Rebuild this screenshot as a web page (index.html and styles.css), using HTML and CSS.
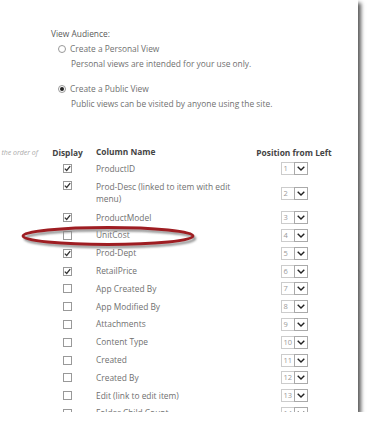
FILE: index.html
```html
<!DOCTYPE html>
<html lang="en">
<head>
    <meta charset="UTF-8">
    <meta name="viewport" content="width=device-width, initial-scale=1.0">
    <title>Edit View - Columns</title>
    <link rel="stylesheet" href="styles.css">
</head>
<body>
    <div class="sheet">
        <div class="audience">
            <div class="aud-title">View Audience:</div>
            <div class="option">
                <div class="opt-label"><span class="radio"></span>Create a Personal View</div>
                <div class="opt-desc">Personal views are intended for your use only.</div>
            </div>
            <div class="option">
                <div class="opt-label"><span class="radio radio-on"></span>Create a Public View</div>
                <div class="opt-desc">Public views can be visited by anyone using the site.</div>
            </div>
        </div>

        <div class="columns">
            <div class="col-row col-head">
                <div class="c-note"><span>the order of</span></div>
                <div class="c-disp">Display</div>
                <div class="c-name">Column Name</div>
                <div class="c-pos">Position from Left</div>
            </div>
            <div id="rows"></div>

            <svg class="ring" width="180" height="26" viewBox="0 0 180 26">
                <defs>
                    <filter id="soft" x="-10%" y="-30%" width="120%" height="160%">
                        <feGaussianBlur stdDeviation="1.2"/>
                    </filter>
                </defs>
                <ellipse cx="89" cy="13.5" rx="85" ry="8.5" fill="none" stroke="#888" stroke-width="2.5" filter="url(#soft)"/>
                <ellipse cx="87" cy="11" rx="85" ry="8.5" fill="none" stroke="#9e1d22" stroke-width="2.8"/>
            </svg>
        </div>
    </div>

    <script>
        const columns = [
            ['ProductID', true],
            ['Prod-Desc (linked to item with edit menu)', true],
            ['ProductModel', true],
            ['UnitCost', false],
            ['Prod-Dept', true],
            ['RetailPrice', true],
            ['App Created By', false],
            ['App Modified By', false],
            ['Attachments', false],
            ['Content Type', false],
            ['Created', false],
            ['Created By', false],
            ['Edit (link to edit item)', false],
            ['Folder Child Count', false]
        ];

        const checkSvg = '<svg width="7" height="7" viewBox="0 0 7 7"><path d="M0.8 3.6 L2.7 5.5 L6.2 1.2" fill="none" stroke="#333" stroke-width="1.3"/></svg>';

        const rows = document.getElementById('rows');
        columns.forEach(([name, shown], i) => {
            const row = document.createElement('div');
            row.className = 'col-row' + (name.length > 30 ? ' col-tall' : '');
            row.innerHTML =
                '<div class="c-note"></div>' +
                '<div class="c-disp"><span class="check">' + (shown ? checkSvg : '') + '</span></div>' +
                '<div class="c-name">' + name + '</div>' +
                '<div class="c-pos"><span class="pick"><span class="pick-num">' + (i + 1) + '</span>' +
                '<span class="pick-arrow"><svg width="8" height="5" viewBox="0 0 8 5"><path d="M0.7 0.7 L4 4 L7.3 0.7" fill="none" stroke="#222" stroke-width="1.4"/></svg></span></span></div>';
            rows.appendChild(row);
        });
    </script>
</body>
</html>
```

FILE: styles.css
```css
* {
    box-sizing: border-box;
    margin: 0;
    padding: 0;
}

body {
    margin: 0;
    background-color: #ffffff;
    font-family: "Open Sans", "Noto Sans", sans-serif;
    font-size: 8.4px;
    color: #707070;
    overflow: hidden;
}

.sheet {
    position: relative;
    width: 358px;
    height: 412px;
    overflow: hidden;
    background-color: #fff;
    box-shadow: 3px 3px 4px rgba(0, 0, 0, 0.65);
    padding-top: 26px;
}

/* audience block */
.audience {
    margin-left: 51px;
}

.aud-title {
    line-height: 15px;
    color: #5a5a5a;
}

.option {
    margin-left: 7px;
    margin-bottom: 10px;
}

.opt-label {
    display: flex;
    align-items: center;
    line-height: 15px;
}

.opt-desc {
    padding-left: 13px;
    line-height: 15px;
}

.radio {
    width: 8px;
    height: 8px;
    border: 1px solid #999;
    border-radius: 50%;
    margin-right: 4px;
    display: flex;
    align-items: center;
    justify-content: center;
}

.radio-on::after {
    content: "";
    width: 4px;
    height: 4px;
    border-radius: 50%;
    background-color: #222;
}

/* columns table */
.columns {
    position: relative;
    margin-top: 33px;
}

.col-row {
    display: flex;
    align-items: center;
    height: 17.8px;
}

.col-head {
    height: 16px;
    font-weight: 700;
    color: #444;
}

.col-tall {
    height: 31px;
    align-items: flex-start;
}

.c-note {
    width: 46px;
    display: flex;
    justify-content: flex-end;
    overflow: hidden;
    white-space: nowrap;
    font-size: 7px;
    font-style: italic;
    font-weight: 400;
    color: #aaa;
    padding-right: 8px;
}

.c-disp {
    width: 43px;
    display: flex;
    justify-content: center;
}

.c-name {
    width: 163px;
    padding-left: 7px;
    padding-right: 12px;
    line-height: 12px;
}

.col-tall .c-disp,
.col-tall .c-name {
    padding-top: 3px;
}

.col-tall .c-pos {
    align-self: center;
}

.c-pos {
    width: 84px;
    display: flex;
    justify-content: center;
}

.check {
    width: 9px;
    height: 9px;
    border: 1px solid #999;
    display: flex;
    align-items: center;
    justify-content: center;
    background-color: #fff;
}

.pick {
    display: flex;
    height: 13px;
}

.pick-num {
    width: 13px;
    border: 1px solid #ccc;
    border-right: none;
    font-size: 7.5px;
    line-height: 11px;
    color: #999;
    padding-left: 2px;
    overflow: hidden;
}

.pick-arrow {
    width: 14px;
    border: 1px solid #aaa;
    display: flex;
    align-items: center;
    justify-content: center;
}

.ring {
    position: absolute;
    left: 21px;
    top: 81px;
}
```
